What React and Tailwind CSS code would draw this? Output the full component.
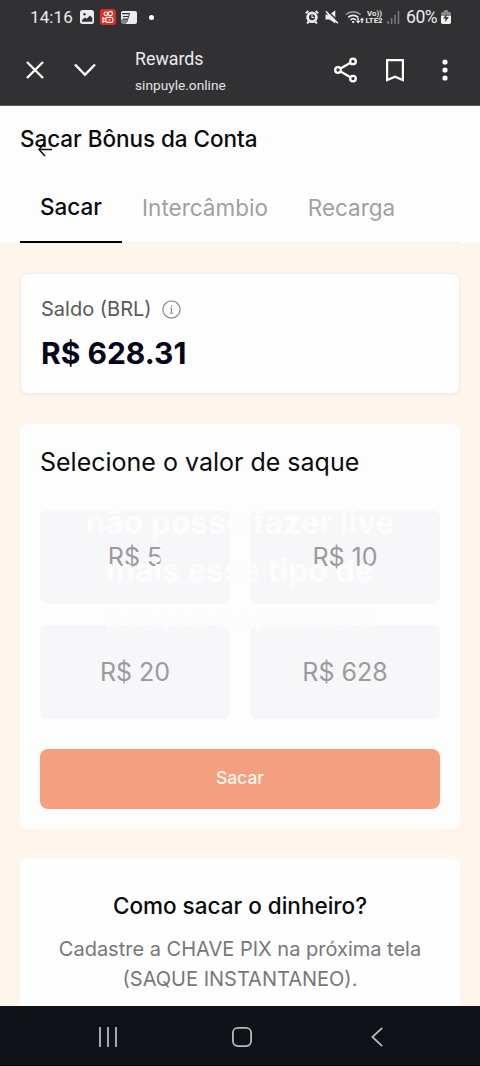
const amounts = ["R$ 5", "R$ 10", "R$ 20", "R$ 628"]

function StatusBar() {
  return (
    <div className="h-[34px] flex items-center justify-between pl-[30px] pr-[29px] text-[#ececee]">
      <div className="flex items-center">
        <span className="w-[50px] text-[17px] leading-5 tracking-[0.1px] font-['Roboto',sans-serif] whitespace-nowrap">14:16</span>
        <svg className="w-[14px] h-[14px]" viewBox="0 0 14 14">
          <rect width="14" height="14" rx="2.5" fill="#ececee" />
          <circle cx="4.5" cy="4.3" r="1.2" fill="#313134" />
          <path d="M2 11.8V10l3-2.5 1.7 1.3L10 5.5l2.3 2.4v3.9z" fill="#313134" />
        </svg>
        <svg className="w-4 h-4 ml-[6px]" viewBox="0 0 16 16" fill="none" stroke="#fff" strokeWidth="1.2">
          <rect width="16" height="16" rx="3" fill="#e52a21" stroke="none" />
          <circle cx="5.9" cy="4.8" r="1.8" />
          <circle cx="10.3" cy="4.5" r="2.2" />
          <rect x="5.8" y="8.4" width="7" height="5" rx="1.6" />
          <path d="M5.8 10.2 3 8.8v4.3l2.8-1.4" />
          <path d="M8.5 10.8h1.8" />
        </svg>
        <svg className="w-4 h-[13px] ml-[5px]" viewBox="0 0 16 13">
          <rect width="16" height="13" rx="2" fill="#ececee" />
          <path d="M1 2.6h7.6M1.8 5.5h5.6M1.6 8.2h4.6" stroke="#313134" strokeWidth="1.2" />
          <path d="M8.6 2.5 5.6 11.5" stroke="#313134" strokeWidth="0.9" />
          <path d="M0 8.8h5.8L4.8 13H0z" fill="#313134" opacity=".55" />
        </svg>
        <span className="size-[5px] rounded-full bg-white ml-[12px]" />
      </div>
      <div className="flex items-center">
        <svg className="w-[14px] h-[14px]" viewBox="0 0 14 14" fill="none" stroke="#ececee">
          <circle cx="7" cy="7.3" r="4.4" strokeWidth="2.8" />
          <path d="M.8 3.4 3.4.9M13.2 3.4 10.6.9M2.1 13.5l1.6-1.8M11.9 13.5l-1.6-1.8" strokeWidth="2" />
          <path d="M7 4.7v2.8h2.2" strokeWidth="1.1" />
        </svg>
        <svg className="w-[14px] h-[14px] ml-[6px]" viewBox="0 0 14 14">
          <path d="M.5 4.6h4l5.8-4.4v13.4L4.5 9.6h-4z" fill="#ececee" />
          <path d="M2.3.8 14 12" stroke="#313134" strokeWidth="1.6" />
          <path d="M.9 1.3 12.9 13.3" stroke="#ececee" strokeWidth="1.6" />
        </svg>
        <svg className="w-[20px] h-[15px] ml-[6px]" viewBox="0 0 20 15" fill="none" stroke="#ececee">
          <path d="M.8 4.6a11 11 0 0 1 14.8 0" strokeWidth="1.4" opacity=".6" />
          <path d="M3.2 7.3a7.5 7.5 0 0 1 10 0" strokeWidth="1.7" />
          <path d="M5.5 10a4 4 0 0 1 5.4 0" strokeWidth="1.6" />
          <path d="M8.2 11v2" strokeWidth="2" />
          <path d="M13.1 7.7v4M17 8.8v4.2" strokeWidth="1.4" />
          <path d="m10.7 10.7 2.4 2.8 2.4-2.8zM14.8 10.2 17 7.5l2.2 2.7z" fill="#ececee" stroke="none" />
        </svg>
        <div className="w-[19px] text-center text-[7.8px] leading-[7px] font-bold font-['Roboto',sans-serif] whitespace-nowrap">
          <div>Vo))</div>
          <div className="-ml-px">LTE2</div>
        </div>
        <svg className="w-[13px] h-[13px] ml-[3px]" viewBox="0 0 13 13" fill="#77777b">
          <path d="M.4 10h1.6v3H.4zM3.8 7h1.6v6H3.8zM7.2 4h1.6v9H7.2zM10.7 0h1.6v13h-1.6z" />
        </svg>
        <span className="w-[34px] ml-[6px] text-[17.5px] leading-5 font-['Roboto',sans-serif] tracking-[-0.4px] whitespace-nowrap">60%</span>
        <svg className="w-[10px] h-[14px] ml-px" viewBox="0 0 10 14">
          <rect x="3" width="4" height="3" rx=".8" fill="#88888b" />
          <rect y="1.7" width="10" height="12.3" rx="2" fill="#88888b" />
          <path d="M0 6h10v6a2 2 0 0 1-2 2H2a2 2 0 0 1-2-2z" fill="#f4f4f5" />
          <path d="M5.8 4 2 8.6h2.5L4.1 12 8 7.3H5.4z" fill="#313134" />
        </svg>
      </div>
    </div>
  )
}

function BrowserBar() {
  return (
    <div className="h-[72px] flex items-center pl-[26px] pr-[32px] text-white">
      <svg className="w-[18px] h-[18px]" viewBox="0 0 18 18" fill="none" stroke="currentColor" strokeWidth="2.3">
        <path d="m1 1 16 16M17 1 1 17" />
      </svg>
      <svg className="w-[22px] h-[14px] ml-[30px]" viewBox="0 0 22 14" fill="none" stroke="currentColor" strokeWidth="2.5">
        <path d="m1 1.5 10 10.3L21 1.5" />
      </svg>
      <div className="flex-1 ml-[39px] pt-[4px] font-['Roboto',sans-serif] whitespace-nowrap">
        <div className="text-[17.8px] leading-[26px] text-[#ececee]">Rewards</div>
        <div className="text-[13.7px] leading-[27px] text-[#e4e4e6]">sinpuyle.online</div>
      </div>
      <svg className="w-6 h-[26px]" viewBox="0 0 24 26" fill="none" stroke="currentColor" strokeWidth="2.3">
        <circle cx="4" cy="13" r="2.8" />
        <circle cx="19" cy="4.4" r="2.8" />
        <circle cx="19" cy="21.6" r="2.8" />
        <path d="m6.5 11.6 10-5.8M6.5 14.4l10 5.8" />
      </svg>
      <svg className="w-[18px] h-[23px] ml-[28px]" viewBox="0 0 18 23" fill="none" stroke="currentColor" strokeWidth="2.2">
        <path d="M1.1 1.1h15.8v20L9 17.7l-7.9 3.4z" />
      </svg>
      <svg className="w-[6px] h-[22px] ml-[38px]" viewBox="0 0 6 22" fill="currentColor">
        <circle cx="3" cy="3" r="2.6" />
        <circle cx="3" cy="11" r="2.6" />
        <circle cx="3" cy="19" r="2.6" />
      </svg>
    </div>
  )
}

function NavBar() {
  return (
    <div className="h-[60px] shrink-0 bg-[#111217] border-b border-black flex items-center pl-[98px] pt-[2px] text-[#b9b9bc]">
      <svg className="w-5 h-5" viewBox="0 0 20 20" stroke="currentColor" strokeWidth="1.8">
        <path d="M2 0v20M10 0v20M18 0v20" />
      </svg>
      <svg className="w-5 h-5 ml-[114px]" viewBox="0 0 20 20" fill="none" stroke="currentColor" strokeWidth="1.8">
        <rect x=".9" y=".9" width="18.2" height="18.2" rx="5" />
      </svg>
      <svg className="w-3 h-5 ml-[119px]" viewBox="0 0 12 20" fill="none" stroke="currentColor" strokeWidth="1.8">
        <path d="M11.2.8 1.4 10l9.8 9.2" />
      </svg>
    </div>
  )
}

export default function App() {
  return (
    <div className="w-[480px] h-[1066px] flex flex-col overflow-hidden bg-[#fef5ed] font-['Inter',sans-serif] text-[#0b0b0d]">
      <header className="h-[106px] shrink-0 bg-[#313134] border-b border-[#5b5b5e]">
        <StatusBar />
        <BrowserBar />
      </header>

      <main className="flex-1 min-h-0 overflow-hidden">
        <section className="h-[137px] bg-[#fefdfe] px-5">
          <div className="relative h-[66px] flex items-center">
            <h1 className="text-[22.5px] leading-[30px] font-medium tracking-[-0.05px] whitespace-nowrap">Sacar Bônus da Conta</h1>
            <svg className="absolute left-[18px] top-[36px] w-[14px] h-[15px]" viewBox="0 0 14 15" fill="none" stroke="currentColor" strokeWidth="1.5">
              <path d="M14 7.5H1M7 1 1 7.5 7 14" />
            </svg>
          </div>
          <nav className="h-[71px] flex border-b border-[#f1efef] text-[22.5px] leading-[30px] text-[#a0a0a3] whitespace-nowrap">
            <div className="w-[102px] h-[71px] shrink-0 pt-[20px] text-center font-medium text-[#0b0b0d] border-b-2 border-black">Sacar</div>
            <div className="w-[166px] shrink-0 pt-[21px] text-center">Intercâmbio</div>
            <div className="w-[127px] shrink-0 pt-[21px] text-center">Recarga</div>
          </nav>
        </section>

        <div className="px-5 pt-[30px] flex flex-col gap-[30px]">
          <section className="h-[121px] rounded-lg bg-[#fefefe] border border-[#f3eeea] shadow-[0_1px_3px_rgba(0,0,0,0.06)] px-5 pt-[22px]">
            <div className="flex items-center h-[26px] text-[20px] text-[#59595c]">
              <span className="whitespace-nowrap">Saldo (BRL)</span>
              <svg className="w-[19px] h-[19px] ml-[10px]" viewBox="0 0 19 19" fill="none" stroke="#8d8d90" strokeWidth="1.3">
                <circle cx="9.5" cy="9.5" r="8.6" />
                <path d="M9.5 8.2v5M8.2 8.4h1.3M7.9 13.3h3.2M9.5 5.3v1.5" strokeWidth="1.1" />
              </svg>
            </div>
            <div className="mt-[12px] text-[30px] leading-[38px] font-bold text-[#06061a] whitespace-nowrap">R$ 628.31</div>
          </section>

          <section className="relative h-[405px] rounded-lg bg-[#fefdfe] px-5 pt-[22px]">
            <h2 className="text-[25px] leading-[32px] whitespace-nowrap">Selecione o valor de saque</h2>
            <div className="mt-[32px] grid grid-cols-2 gap-x-5 gap-y-[21px]">
              {amounts.map((amount) => (
                <button key={amount} type="button" className="h-[94px] pt-[2px] rounded-lg bg-[#f7f6f8] text-[25px] text-[#9b9b9e]">
                  {amount}
                </button>
              ))}
            </div>
            <button type="button" className="mt-[30px] w-full h-[60px] pb-px rounded-lg bg-[#f4a080] text-[17.5px] font-medium text-[#fff7ea]">
              Sacar
            </button>

            {/* caption laid over the amounts */}
            <div className="absolute inset-x-0 top-[75px] text-center text-[31.7px] leading-[48px] font-bold text-[#fdfcfd] whitespace-nowrap pointer-events-none">
              <div>não posso fazer live</div>
              <div>mais esse tipo de</div>
              <div className="opacity-60 text-[29px]">porque o aplicativo</div>
            </div>
          </section>

          <section className="h-[200px] rounded-t-lg bg-[#fefefe] pt-[32px] text-center whitespace-nowrap">
            <h2 className="text-[22.5px] leading-[30px] font-medium">Como sacar o dinheiro?</h2>
            <p className="mt-[13px] text-[20px] leading-[30px] text-[#77777a]">
              Cadastre a CHAVE PIX na próxima tela
              <br />
              (SAQUE INSTANTANEO).
            </p>
          </section>
        </div>
      </main>

      <NavBar />
    </div>
  )
}
